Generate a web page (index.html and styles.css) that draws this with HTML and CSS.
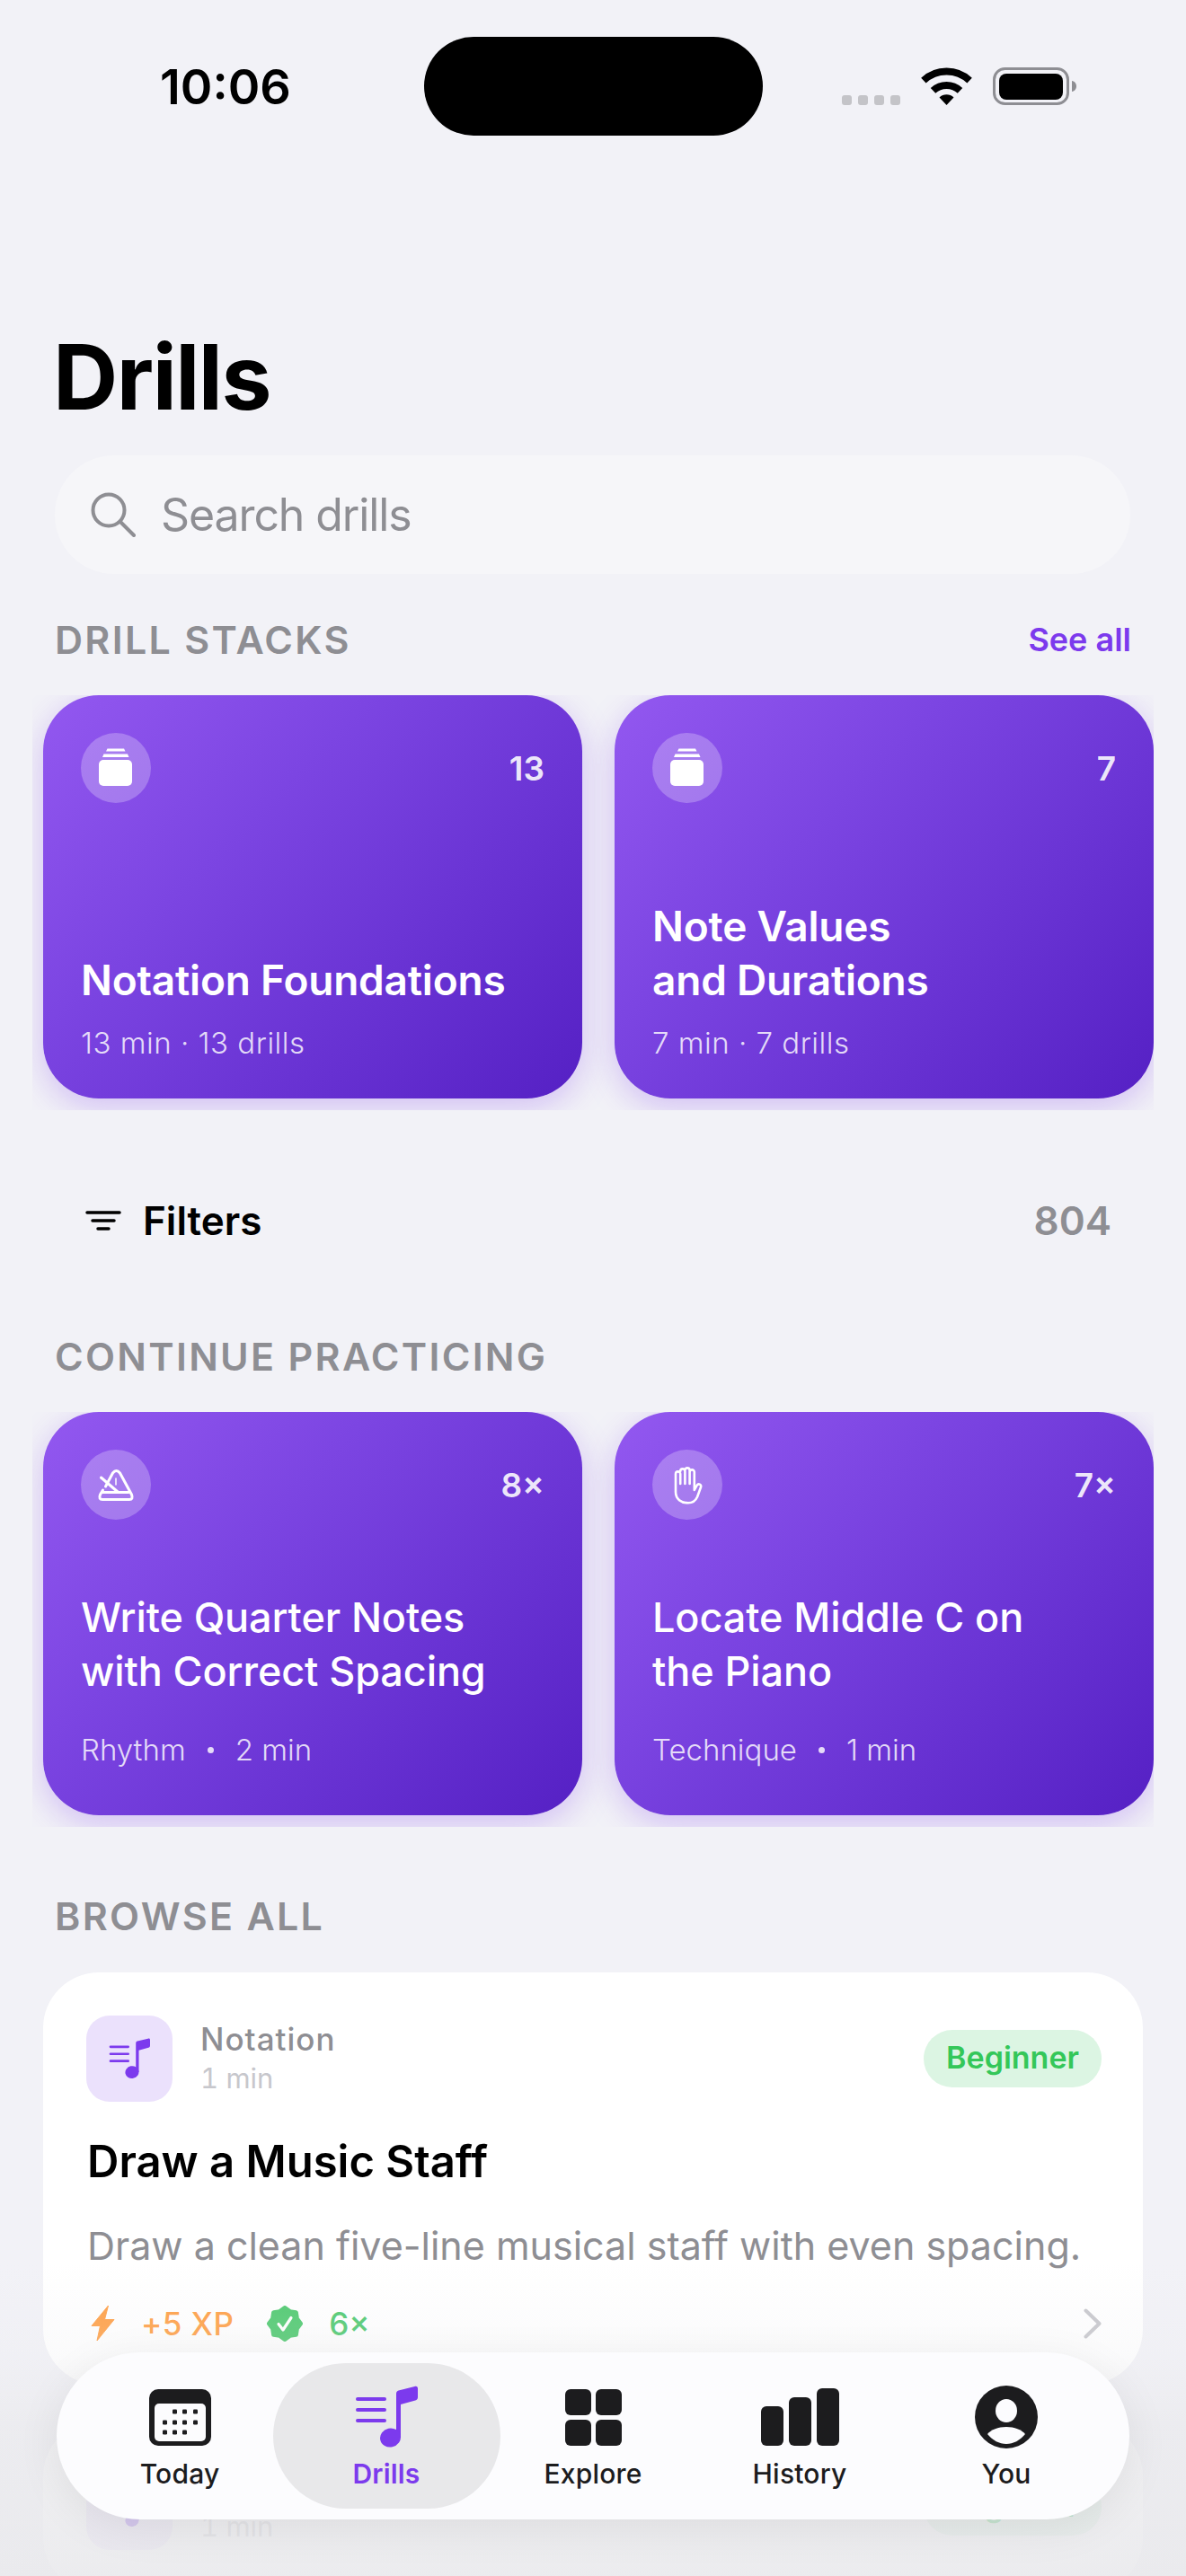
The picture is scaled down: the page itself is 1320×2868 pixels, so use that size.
FILE: index.html
```html
<!DOCTYPE html>
<html lang="en">
<head>
    <meta charset="UTF-8">
    <meta name="viewport" content="width=device-width, initial-scale=1.0">
    <title>Drills</title>
    <link rel="stylesheet" href="styles.css">
</head>
<body>
    <svg class="defs" width="0" height="0">
        <symbol id="note-list" viewBox="0 0 70 70">
            <path d="M3 15H33M3 27H33M3 39H33" fill="none" stroke="currentColor" stroke-width="4" stroke-linecap="round"/>
            <path d="M46 9c0-2 1-3 2.500-3.500L66.500 1C69 .4 70 1.500 70 3.500V13c0 2-1 3-2.700 3.500L51 21V58H46Z" fill="currentColor"/>
            <ellipse cx="39.500" cy="58" rx="11.500" ry="10.500" fill="currentColor" transform="rotate(-12 39.500 58)"/>
        </symbol>
        <symbol id="stack" viewBox="0 0 78 78">
            <rect x="20" y="30" width="37" height="29" rx="5" fill="#fff"/>
            <path d="M24 27L25.500 23.500H52L53.500 27Z" fill="#fff"/>
            <path d="M28 20.500L29.500 17.500H48L49.500 20.500Z" fill="#fff"/>
        </symbol>
    </svg>

    <div class="screen">
        <div class="status">
            <div class="time">10:06</div>
            <div class="island"></div>
            <div class="status-icons">
                <svg width="65" height="11" viewBox="0 0 65 11" fill="#c4c4c8">
                    <rect width="11" height="11" rx="3"/>
                    <rect x="18" width="11" height="11" rx="3"/>
                    <rect x="36" width="11" height="11" rx="3"/>
                    <rect x="54" width="11" height="11" rx="3"/>
                </svg>
                <svg class="wifi" width="57" height="42" viewBox="0 0 57 42">
                    <path d="M2.900 14.600A37.500 37.500 0 0 1 54.100 14.600M13.500 25.900A22 22 0 0 1 43.500 25.900" fill="none" stroke="#000" stroke-width="8"/>
                    <path d="M28.500 42L20.500 33.500A11.500 11.500 0 0 1 36.500 33.500Z"/>
                </svg>
                <svg class="battery" width="93" height="42" viewBox="0 0 93 42">
                    <rect x="1.500" y="1.500" width="82" height="39" rx="12" fill="none" stroke="#8e8e93" stroke-width="3"/>
                    <rect x="7" y="7" width="71" height="29" rx="8"/>
                    <path d="M88 15c3 .5 5 3 5 6s-2 5.500-5 6Z" fill="#8e8e93"/>
                </svg>
            </div>
        </div>

        <h1 class="page-title">Drills</h1>

        <div class="search">
            <svg width="50" height="50" viewBox="0 0 50 50" fill="none" stroke="#8e8e93" stroke-width="4" stroke-linecap="round">
                <circle cx="20" cy="20" r="17.500"/>
                <path d="M33 33L48 48"/>
            </svg>
            <span>Search drills</span>
        </div>

        <div class="section-head">
            <h2>DRILL STACKS</h2>
            <span class="see-all">See all</span>
        </div>
        <div class="rail">
            <div class="promo">
                <div class="promo-top">
                    <div class="promo-icon"><svg width="78" height="78"><use href="#stack"/></svg></div>
                    <span class="promo-count">13</span>
                </div>
                <div class="promo-title">Notation Foundations</div>
                <div class="promo-sub">13 min · 13 drills</div>
            </div>
            <div class="promo">
                <div class="promo-top">
                    <div class="promo-icon"><svg width="78" height="78"><use href="#stack"/></svg></div>
                    <span class="promo-count">7</span>
                </div>
                <div class="promo-title">Note Values<br>and Durations</div>
                <div class="promo-sub">7 min · 7 drills</div>
            </div>
        </div>

        <div class="filters">
            <svg width="40" height="24" viewBox="0 0 40 24" fill="none" stroke="#000" stroke-width="3.500" stroke-linecap="round">
                <path d="M2 3H38M8 12H32M14 21H26"/>
            </svg>
            <span class="filters-label">Filters</span>
            <span class="filters-count">804</span>
        </div>

        <div class="section-head section-gap">
            <h2>CONTINUE PRACTICING</h2>
        </div>
        <div class="rail">
            <div class="promo promo-drill">
                <div class="promo-top">
                    <div class="promo-icon">
                        <svg width="78" height="78" viewBox="0 0 78 78" fill="none" stroke="#fff" stroke-width="3" stroke-linecap="round" stroke-linejoin="round">
                            <path d="M27.500 41L35.500 26Q39.500 21 43.500 26L56.500 50Q58.500 55.500 54 55.500H24Q19.500 55.500 21.500 50L24.500 45"/>
                            <path d="M24 47.500H53"/>
                            <path d="M22.500 31L41 47"/>
                            <path d="M39 32V39" stroke-width="1.500"/>
                        </svg>
                    </div>
                    <span class="promo-count">8×</span>
                </div>
                <div class="promo-title">Write Quarter Notes<br>with Correct Spacing</div>
                <div class="promo-sub"><span>Rhythm</span><i class="dot"></i><span>2 min</span></div>
            </div>
            <div class="promo promo-drill">
                <div class="promo-top">
                    <div class="promo-icon">
                        <svg width="78" height="78" viewBox="0 0 78 78" fill="none" stroke="#fff" stroke-width="2.600" stroke-linecap="round" stroke-linejoin="round">
                            <path d="M26 47V27a2.600 2.600 0 0 1 5.200 0V38M31.200 24a2.600 2.600 0 0 1 5.200 0V38M36.400 23a2.600 2.600 0 0 1 5.200 0V38M41.600 25a2.600 2.600 0 0 1 5.200 0V45l3-5.500a2.400 2.400 0 0 1 4.300 2l-4 11c-2 4.500-5.500 6.800-10.100 6.800C32 59.300 26 55 26 47"/>
                        </svg>
                    </div>
                    <span class="promo-count">7×</span>
                </div>
                <div class="promo-title">Locate Middle C on<br>the Piano</div>
                <div class="promo-sub"><span>Technique</span><i class="dot"></i><span>1 min</span></div>
            </div>
        </div>

        <div class="section-head section-gap-small">
            <h2>BROWSE ALL</h2>
        </div>

        <div class="list">
            <div class="drill-card">
                <div class="drill-head">
                    <div class="tile"><svg width="46" height="46"><use href="#note-list"/></svg></div>
                    <div class="drill-meta">
                        <div class="drill-cat">Notation</div>
                        <div class="drill-time">1 min</div>
                    </div>
                    <span class="level-pill">Beginner</span>
                </div>
                <div class="drill-title">Draw a Music Staff</div>
                <div class="drill-desc">Draw a clean five-line musical staff with even spacing.</div>
                <div class="drill-foot">
                    <svg class="bolt" width="27" height="41" viewBox="0 0 27 41">
                        <path d="M19.500 1L1 23.500H10.500L7 40L26 16.500H15.500Z" fill="#ff9f45" stroke="#ff9f45" stroke-width="1" stroke-linejoin="round"/>
                    </svg>
                    <span class="xp">+5 XP</span>
                    <svg class="seal" width="40" height="40" viewBox="0 0 40 40">
                        <polygon points="20,2.500 25.550,6.600 32.400,7.600 33.400,14.450 37.500,20 33.400,25.550 32.400,32.400 25.550,33.400 20,37.500 14.450,33.400 7.600,32.400 6.600,25.550 2.500,20 6.600,14.450 7.600,7.600 14.450,6.600" fill="#4ec96f" stroke="#4ec96f" stroke-width="5" stroke-linejoin="round"/>
                        <path d="M13 20.500L18 27L27 13.500" fill="none" stroke="#fff" stroke-width="3.200" stroke-linecap="round" stroke-linejoin="round"/>
                    </svg>
                    <span class="times">6×</span>
                    <svg class="chevron" width="20" height="34" viewBox="0 0 20 34" fill="none" stroke="#c7c7cc" stroke-width="4" stroke-linecap="round" stroke-linejoin="round">
                        <path d="M2.500 2.500L17.500 17L2.500 31.500"/>
                    </svg>
                </div>
            </div>

            <div class="drill-card">
                <div class="drill-head">
                    <div class="tile"><svg width="46" height="46"><use href="#note-list"/></svg></div>
                    <div class="drill-meta">
                        <div class="drill-cat">Notation</div>
                        <div class="drill-time">1 min</div>
                    </div>
                    <span class="level-pill">Beginner</span>
                </div>
            </div>
        </div>

        <div class="bottom-fade"></div>

        <nav class="tabbar">
            <div class="tab">
                <div class="tab-icon">
                    <svg width="69" height="63" viewBox="0 0 69 63">
                        <rect width="69" height="63" rx="10" fill="#1c1c1e"/>
                        <rect x="6" y="16" width="57" height="42" rx="5" fill="#fcfcfe"/>
                        <g fill="#1c1c1e">
                            <rect x="26" y="22.500" width="5" height="5" rx="1.200"/>
                            <rect x="37" y="22.500" width="5" height="5" rx="1.200"/>
                            <rect x="49" y="22.500" width="5" height="5" rx="1.200"/>
                            <rect x="15" y="34.500" width="5" height="5" rx="1.200"/>
                            <rect x="26" y="34.500" width="5" height="5" rx="1.200"/>
                            <rect x="37" y="34.500" width="5" height="5" rx="1.200"/>
                            <rect x="49" y="34.500" width="5" height="5" rx="1.200"/>
                            <rect x="15" y="45.500" width="5" height="5" rx="1.200"/>
                            <rect x="26" y="45.500" width="5" height="5" rx="1.200"/>
                            <rect x="37" y="45.500" width="5" height="5" rx="1.200"/>
                        </g>
                    </svg>
                </div>
                <span>Today</span>
            </div>
            <div class="tab tab-active">
                <div class="tab-icon"><svg width="70" height="70"><use href="#note-list"/></svg></div>
                <span>Drills</span>
            </div>
            <div class="tab">
                <div class="tab-icon">
                    <svg width="63" height="63" viewBox="0 0 63 63" fill="#1c1c1e">
                        <rect width="29" height="29" rx="6"/>
                        <rect x="34" width="29" height="29" rx="6"/>
                        <rect y="34" width="29" height="29" rx="6"/>
                        <rect x="34" y="34" width="29" height="29" rx="6"/>
                    </svg>
                </div>
                <span>Explore</span>
            </div>
            <div class="tab">
                <div class="tab-icon">
                    <svg width="87" height="64" viewBox="0 0 87 64" fill="#1c1c1e">
                        <rect y="20" width="25" height="44" rx="6"/>
                        <rect x="31" y="10" width="25" height="54" rx="6"/>
                        <rect x="62" width="25" height="64" rx="6"/>
                    </svg>
                </div>
                <span>History</span>
            </div>
            <div class="tab">
                <div class="tab-icon">
                    <svg width="70" height="70" viewBox="0 0 70 70">
                        <circle cx="35" cy="35" r="35" fill="#1c1c1e"/>
                        <ellipse cx="35" cy="28" rx="12" ry="13" fill="#fcfcfe"/>
                        <path d="M14 54C18 49 26 46 35 46C44 46 52 49 56 54C50 61 43 65 35 65C27 65 20 61 14 54Z" fill="#fcfcfe"/>
                    </svg>
                </div>
                <span>You</span>
            </div>
        </nav>
    </div>
</body>
</html>
```

FILE: styles.css
```css
* {
    box-sizing: border-box;
}
body {
    margin: 0;
    background-color: #f2f2f7;
    font-family: Inter, "Liberation Sans", sans-serif;
    color: #000;
}
h1, h2 {
    margin: 0;
}
.defs {
    display: block;
    height: 0;
}
.screen {
    position: relative;
    width: 1320px;
    height: 2868px;
    overflow: hidden;
}

/* Status bar */
.status {
    display: grid;
    grid-template-columns: 472px 377px 1fr;
    padding-top: 41px;
}
.time {
    padding-left: 178px;
    align-self: center;
    font-size: 54px;
    font-weight: 600;
}
.island {
    height: 110px;
    background-color: #000;
    border-radius: 55px;
}
.status-icons {
    display: flex;
    align-items: flex-end;
    height: 76px;
    padding-left: 88px;
}
.wifi {
    margin-left: 23px;
}
.battery {
    margin-left: 23px;
}

/* Title + search */
.page-title {
    margin: 214px 0 32px 59px;
    font-size: 100px;
    line-height: 110px;
    font-weight: 700;
    letter-spacing: -1.5px;
}
.search {
    display: flex;
    align-items: center;
    gap: 28px;
    height: 132px;
    margin: 0 62px 47px 61px;
    padding-left: 40px;
    background-color: #f6f6f9;
    border-radius: 66px;
    font-size: 50px;
    letter-spacing: -1.1px;
    color: #8e8e93;
}

/* Section headers */
.section-head {
    display: flex;
    justify-content: space-between;
    align-items: center;
    height: 52px;
    margin: 0 61px 36px;
}
.section-head h2 {
    font-size: 43px;
    line-height: 52px;
    font-weight: 600;
    letter-spacing: 2.3px;
    color: #8e8e93;
}
.see-all {
    font-size: 36px;
    font-weight: 600;
    color: #7c3aed;
}
.section-gap {
    margin-top: 95px;
}
.section-gap-small {
    margin-top: 73px;
    margin-bottom: 37px;
}

/* Purple cards */
.rail {
    display: flex;
    gap: 36px;
    margin: 0 36px;
    padding: 0 0 13px 12px;
    overflow: hidden;
}
.promo {
    display: flex;
    flex-direction: column;
    flex: none;
    width: 600px;
    height: 449px;
    padding: 42px 42px 42px 42px;
    border-radius: 62px;
    background: linear-gradient(135deg, #9358f0 0%, #7c45e2 35%, #5520c4 100%);
    box-shadow: 0 10px 36px rgba(124, 58, 237, 0.28);
    color: #fff;
}
.promo-top {
    display: flex;
    justify-content: space-between;
    align-items: center;
}
.promo-icon {
    width: 78px;
    height: 78px;
    border-radius: 50%;
    background-color: rgba(255, 255, 255, 0.25);
}
.promo-icon svg {
    display: block;
}
.promo-count {
    font-size: 37px;
    font-weight: 600;
    color: rgba(255, 255, 255, 0.9);
}
.promo-title {
    margin-top: auto;
    font-size: 46px;
    line-height: 60px;
    font-weight: 600;
    letter-spacing: -0.2px;
}
.promo-sub {
    display: flex;
    align-items: center;
    gap: 24px;
    margin-top: 20px;
    font-size: 33px;
    line-height: 40px;
    font-weight: 300;
    letter-spacing: 0.5px;
    color: rgba(255, 255, 255, 0.82);
}
.promo-drill {
    padding-bottom: 53px;
}
.promo-drill .promo-title {
    font-size: 45px;
    font-weight: 500;
    letter-spacing: -0.1px;
}
.promo-drill .promo-sub {
    margin-top: 37px;
    letter-spacing: 0;
}
.dot {
    width: 7px;
    height: 7px;
    border-radius: 50%;
    background-color: rgba(255, 255, 255, 0.82);
}

/* Filters */
.filters {
    display: flex;
    align-items: center;
    height: 60px;
    margin-top: 93px;
    padding: 0 83px 0 95px;
}
.filters-label {
    margin-left: 24px;
    font-size: 44px;
    font-weight: 600;
}
.filters-count {
    margin-left: auto;
    font-size: 44px;
    font-weight: 600;
    color: #8e8e93;
}

/* White drill cards */
.list {
    display: flex;
    flex-direction: column;
    gap: 40px;
    margin: 0 48px;
}
.drill-card {
    padding: 48px 46px 48px 48px;
    background-color: #fff;
    border-radius: 62px;
}
.drill-head {
    display: flex;
    align-items: center;
}
.tile {
    display: flex;
    justify-content: center;
    align-items: center;
    width: 96px;
    height: 96px;
    border-radius: 26px;
    background-color: #ebe1fc;
    color: #7c3aed;
}
.drill-meta {
    margin-left: 31px;
}
.drill-cat {
    font-size: 35px;
    line-height: 40px;
    font-weight: 500;
    letter-spacing: 1px;
    color: #8e8e93;
}
.drill-time {
    margin-top: 3px;
    font-size: 31px;
    line-height: 42px;
    font-variant-numeric: tabular-nums;
    color: #c7c7cc;
}
.level-pill {
    margin-left: auto;
    padding: 0 25px;
    height: 64px;
    border-radius: 32px;
    background-color: #dcf5e3;
    font-size: 34px;
    line-height: 62px;
    font-weight: 600;
    color: #34c759;
}
.drill-title {
    margin-top: 38px;
    padding-left: 1px;
    font-size: 49px;
    line-height: 58px;
    font-weight: 600;
}
.drill-desc {
    margin-top: 38px;
    padding-left: 1px;
    font-size: 43px;
    line-height: 52px;
    color: #8e8e93;
}
.drill-foot {
    display: flex;
    align-items: center;
    height: 41px;
    margin-top: 40px;
    font-size: 35px;
    font-weight: 500;
}
.bolt {
    margin-left: 5px;
}
.xp {
    margin-left: 29px;
    letter-spacing: 0.4px;
    color: #ff9f45;
}
.seal {
    margin-left: 37px;
}
.times {
    margin-left: 29px;
    color: #4ec96f;
}
.chevron {
    margin-left: auto;
}

/* Bottom fade + floating tab bar */
.bottom-fade {
    position: absolute;
    left: 0;
    right: 0;
    bottom: 0;
    height: 348px;
    background: linear-gradient(180deg, rgba(233, 233, 236, 0) 0%, rgba(233, 233, 236, 0.2) 29%, rgba(233, 233, 236, 0.68) 52%, rgba(233, 233, 236, 0.88) 100%);
}
.tabbar {
    position: absolute;
    left: 63px;
    top: 2619px;
    display: grid;
    grid-template-columns: repeat(5, 230px);
    width: 1194px;
    height: 186px;
    padding: 12px 22px;
    border-radius: 93px;
    background-color: #fcfcfe;
    box-shadow: 0 10px 50px rgba(0, 0, 0, 0.07);
}
.tab {
    display: flex;
    flex-direction: column;
    align-items: center;
    gap: 10px;
    height: 162px;
    padding-top: 25px;
    font-size: 30px;
    line-height: 36px;
    font-weight: 500;
    letter-spacing: 0.2px;
    color: #1c1c1e;
}
.tab-icon {
    display: flex;
    align-items: center;
    height: 70px;
}
.tab-active {
    margin: 0 -11.5px;
    background-color: #e8e8ea;
    border-radius: 81px;
    font-weight: 600;
    color: #7c3aed;
}
```
